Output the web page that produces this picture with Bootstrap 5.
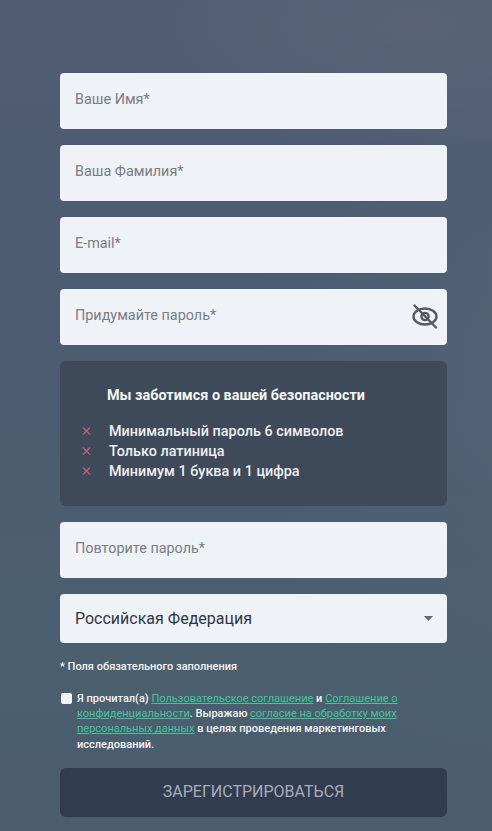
<!DOCTYPE html>
<html lang="ru">
<head>
<meta charset="utf-8">
<title>Регистрация</title>
<link href="https://cdn.jsdelivr.net/npm/bootstrap@5.3.0/dist/css/bootstrap.min.css" rel="stylesheet">
<style>
html,body{height:100%;}
body{font-family:Roboto,"Liberation Sans",sans-serif;overflow:hidden;
background:radial-gradient(ellipse 260px 420px at 105% 45%,rgba(88,102,122,.5),transparent),radial-gradient(ellipse 320px 130px at 85% 3%,#5a6378,transparent),linear-gradient(180deg,#4f5c72 0%,#4c5b6f 45%,#4b5f6f 80%,#4a5c6e 100%);}
.reg-form{padding:73px 45px 0 60px;}
.reg-field{height:56px;background:#eff2f7;border:0;border-radius:4px;padding:0 50px 3px 15px;font-size:14.4px;color:#2f3648;box-shadow:none;}
.reg-field::placeholder{color:#7a7d84;opacity:1;}
.reg-field:focus{background:#eff2f7;box-shadow:none;}
.reg-wrap{margin-bottom:16px;}
.reg-eye{position:absolute;right:8px;top:13px;width:28px;height:28px;background:none;border:0;padding:0;color:#555a62;}
.reg-info{height:145px;margin-bottom:16px;background:#3e4a5a;border-radius:6px;color:#fff;padding:27px 0 0 22px;}
.reg-info-title{font-size:14.4px;font-weight:700;line-height:16px;margin:0 0 18px 25px;color:#f5f6f8;}
.reg-rules{font-size:14.4px;font-weight:500;line-height:20px;color:#eceef2;margin:0;padding:0;list-style:none;}
.reg-rules li{display:flex;align-items:center;}
.reg-cross{width:27px;flex:none;margin-top:-2px;}
.reg-select{height:49px;background-color:#eff2f7;border:0;border-radius:4px;padding:0 40px 0 15px;font-size:16px;color:#2f3648;margin-bottom:17px;box-shadow:none;
background-image:url("data:image/svg+xml,%3Csvg xmlns='http://www.w3.org/2000/svg' width='10' height='6'%3E%3Cpath d='M0 0h10L5 6z' fill='%23666b74'/%3E%3C/svg%3E");background-position:right 14px center;background-size:9px 5px;background-repeat:no-repeat;}
.reg-note{font-size:11px;font-weight:500;line-height:14px;color:#f2f4f6;margin:0 0 17px;}
.reg-check{display:flex;margin-bottom:16px;font-size:11px;font-weight:500;line-height:15.2px;color:#f4f5f7;}
.reg-box{flex:none;width:11px;height:11px;margin:2px 5px 0 1px;background:#eff2f7;border:0;border-radius:2px;appearance:none;}
.reg-check a{color:#45c2a0;font-weight:400;}
.reg-submit{display:block;width:100%;height:49px;background:#323c50;border:0;border-radius:6px;color:#a8adb9;font-size:16px;text-transform:uppercase;}
</style>
</head>
<body>
<form class="reg-form">
  <div class="reg-wrap"><input class="form-control reg-field" type="text" placeholder="Ваше Имя*"></div>
  <div class="reg-wrap"><input class="form-control reg-field" type="text" placeholder="Ваша Фамилия*"></div>
  <div class="reg-wrap"><input class="form-control reg-field" type="email" placeholder="E-mail*"></div>
  <div class="reg-wrap position-relative">
    <input class="form-control reg-field" type="password" placeholder="Придумайте пароль*">
    <button class="reg-eye" type="button" aria-label="Показать пароль">
      <svg width="28" height="28" viewBox="0 0 28 28" fill="none" stroke="currentColor" stroke-width="2.400" stroke-linecap="round">
        <path d="M2.500 14.500C2.500 10 8 6.500 14 6.500s11.500 3.500 11.500 8-5.500 8-11.500 8-11.500-3.500-11.500-8z"/>
        <circle cx="14" cy="14.500" r="3.600"/>
        <path d="M3.500 3.500 25 25.500"/>
      </svg>
    </button>
  </div>
  <div class="reg-info">
    <p class="reg-info-title">Мы заботимся о вашей безопасности</p>
    <ul class="reg-rules">
      <li><svg class="reg-cross" width="27" height="8" viewBox="0 0 27 8" fill="none" stroke="#c9616f" stroke-width="1.100"><path d="M1 0.500 8 7.500M8 0.500 1 7.500"/></svg>Минимальный пароль 6 символов</li>
      <li><svg class="reg-cross" width="27" height="8" viewBox="0 0 27 8" fill="none" stroke="#c9616f" stroke-width="1.100"><path d="M1 0.500 8 7.500M8 0.500 1 7.500"/></svg>Только латиница</li>
      <li><svg class="reg-cross" width="27" height="8" viewBox="0 0 27 8" fill="none" stroke="#c9616f" stroke-width="1.100"><path d="M1 0.500 8 7.500M8 0.500 1 7.500"/></svg>Минимум 1 буква и 1 цифра</li>
    </ul>
  </div>
  <div class="reg-wrap"><input class="form-control reg-field" type="password" placeholder="Повторите пароль*"></div>
  <select class="form-select reg-select"><option>Российская Федерация</option></select>
  <p class="reg-note">* Поля обязательного заполнения</p>
  <label class="reg-check">
    <input class="reg-box" type="checkbox">
    <span>Я прочитал(а) <a href="#">Пользовательское соглашение</a> и <a href="#">Соглашение о конфиденциальности</a>. Выражаю <a href="#">согласие на обработку моих персональных данных</a> в целях проведения маркетинговых исследований.</span>
  </label>
  <button class="reg-submit" type="button">Зарегистрироваться</button>
</form>
<script src="https://cdn.jsdelivr.net/npm/bootstrap@5.3.0/dist/js/bootstrap.bundle.min.js"></script>
</body>
</html>
